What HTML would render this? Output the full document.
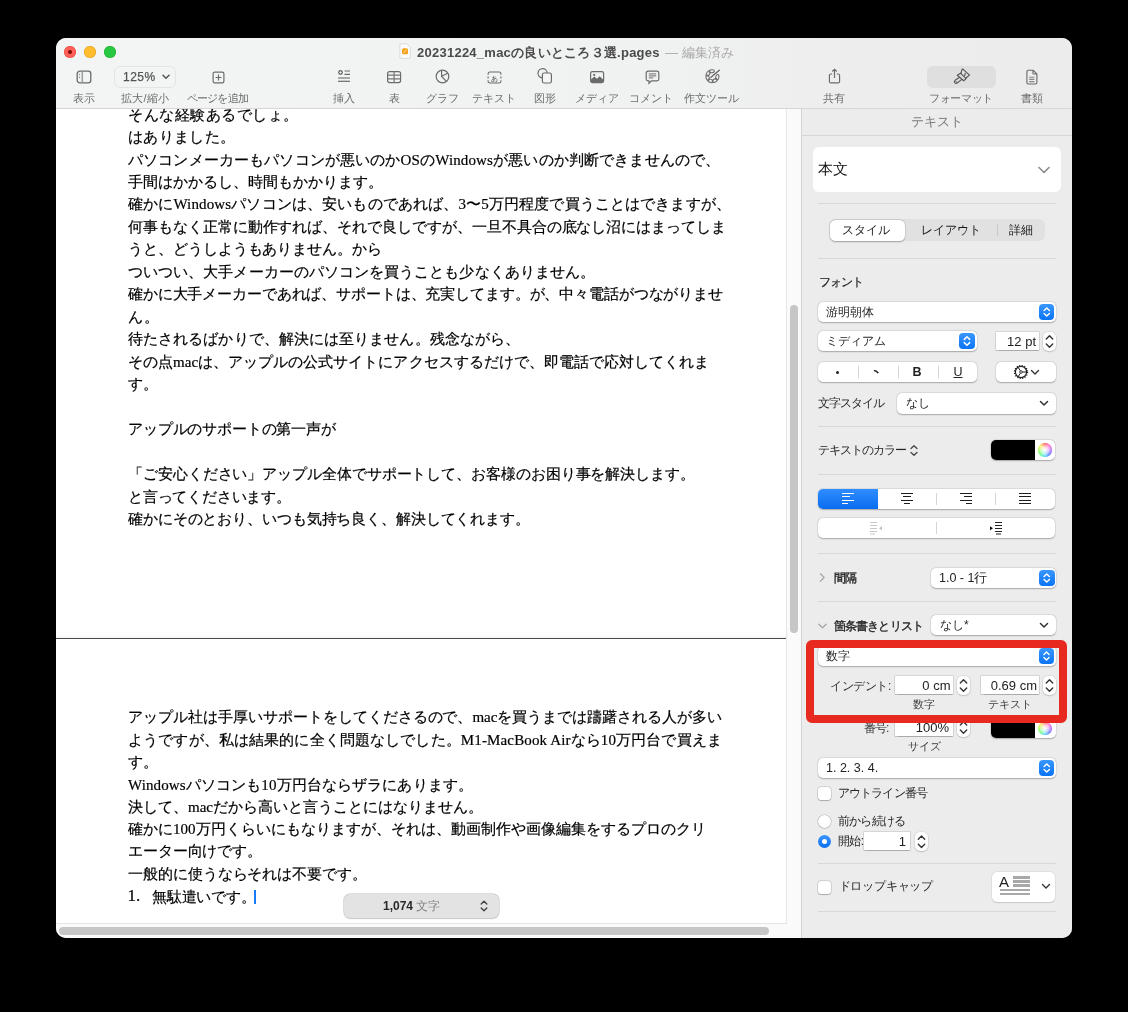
<!DOCTYPE html>
<html><head><meta charset="utf-8">
<style>
*{box-sizing:border-box;margin:0;padding:0}
html,body{width:1128px;height:1012px;overflow:hidden;background:#000}
body{font-family:"Liberation Sans",sans-serif;position:relative}
.a{position:absolute}
.win{position:absolute;left:56px;top:38px;width:1016px;height:900px;border-radius:10px;overflow:hidden;background:#ececec;will-change:transform}
.g{position:absolute;left:-56px;top:-38px;width:1128px;height:1012px}
.tb{position:absolute;left:56px;top:38px;width:1016px;height:70px;background:linear-gradient(90deg,#f3f4f4 0%,#f0f1f1 60%,#ededed 80%,#ececec 100%)}
.tbl{position:absolute;top:91px;height:14px;font-size:11px;line-height:14px;color:#6c6c6c;white-space:nowrap;text-align:center}
.doc{position:absolute;left:56px;top:109px;width:730px;height:814px;background:#fff;overflow:hidden}
.L{position:absolute;left:128px;height:20px;line-height:20px;font-family:"Liberation Serif",serif;font-size:15px;color:#000;white-space:nowrap;-webkit-text-stroke:.2px #000}
.side{position:absolute;left:801px;top:108px;width:271px;height:830px;background:#ececec;border-left:1px solid #d3d3d3}
.sep{position:absolute;left:818px;width:238px;height:1px;background:#d8d8d8}
.pop{position:absolute;background:#fff;border-radius:5px;box-shadow:0 0.5px 1.5px rgba(0,0,0,.28),0 0 0 .5px rgba(0,0,0,.06)}
.lab{position:absolute;font-size:12px;line-height:14px;color:#262626;white-space:nowrap}
.blue{position:absolute;border-radius:4px;background:linear-gradient(#3b97ff,#0a74f5)}
.fld{position:absolute;background:#fff;box-shadow:0 0 0 .5px rgba(0,0,0,.18),0 .5px 1px rgba(0,0,0,.2)}
.stp{position:absolute;background:#fff;border-radius:5px;box-shadow:0 .5px 1.5px rgba(0,0,0,.28),0 0 0 .5px rgba(0,0,0,.06)}
</style></head><body>
<div class="win"><div class="g">
  <!-- toolbar -->
  <!-- document -->
  <div class="doc"></div>
<div class="L" style="top:105.0px;letter-spacing:0.500px">そんな経験あるでしょ。</div>
<div class="L" style="top:127.2px;letter-spacing:0.333px">はありました。</div>
<div class="L" style="top:149.5px;letter-spacing:0.143px">パソコンメーカーもパソコンが悪いのかOSのWindowsが悪いのか判断できませんので、</div>
<div class="L" style="top:172.1px;letter-spacing:0.000px">手間はかかるし、時間もかかります。</div>
<div class="L" style="top:194.0px;letter-spacing:0.140px">確かにWindowsパソコンは、安いものであれば、3〜5万円程度で買うことはできますが、</div>
<div class="L" style="top:216.5px;letter-spacing:-0.051px">何事もなく正常に動作すれば、それで良しですが、一旦不具合の底なし沼にはまってしま</div>
<div class="L" style="top:239.0px;letter-spacing:-0.062px">うと、どうしようもありません。から</div>
<div class="L" style="top:261.5px;letter-spacing:0.067px">ついつい、大手メーカーのパソコンを買うことも少なくありません。</div>
<div class="L" style="top:284.0px;letter-spacing:-0.128px">確かに大手メーカーであれば、サポートは、充実してます。が、中々電話がつながりませ</div>
<div class="L" style="top:306.5px;letter-spacing:1.000px">ん。</div>
<div class="L" style="top:329.0px;letter-spacing:0.080px">待たされるばかりで、解決には至りません。残念ながら、</div>
<div class="L" style="top:351.5px;letter-spacing:0.026px">その点macは、アップルの公式サイトにアクセスするだけで、即電話で応対してくれま</div>
<div class="L" style="top:374.0px;letter-spacing:0.000px">す。</div>
<div class="L" style="top:419.0px;letter-spacing:-0.154px">アップルのサポートの第一声が</div>
<div class="L" style="top:464.0px;letter-spacing:-0.081px">「ご安心ください」アップル全体でサポートして、お客様のお困り事を解決します。</div>
<div class="L" style="top:486.5px;letter-spacing:-0.200px">と言ってくださいます。</div>
<div class="L" style="top:509.0px;letter-spacing:-0.115px">確かにそのとおり、いつも気持ち良く、解決してくれます。</div>
<div class="L" style="top:707.1px;letter-spacing:-0.025px">アップル社は手厚いサポートをしてくださるので、macを買うまでは躊躇される人が多い</div>
<div class="L" style="top:729.7px;letter-spacing:0.130px">ようですが、私は結果的に全く問題なしでした。M1-MacBook Airなら10万円台で買えま</div>
<div class="L" style="top:752.3px;letter-spacing:0.000px">す。</div>
<div class="L" style="top:774.9px;letter-spacing:0.115px">Windowsパソコンも10万円台ならザラにあります。</div>
<div class="L" style="top:796.5px;letter-spacing:0.000px">決して、macだから高いと言うことにはなりません。</div>
<div class="L" style="top:819.0px;letter-spacing:0.000px">確かに100万円くらいにもなりますが、それは、動画制作や画像編集をするプロのクリ</div>
<div class="L" style="top:841.2px;letter-spacing:-0.125px">エーター向けです。</div>
<div class="L" style="top:863.8px;letter-spacing:-0.067px">一般的に使うならそれは不要です。</div>

<div class="a" style="left:56px;top:634px;width:730px;height:4px;background:linear-gradient(#fff,#f6f6f6)"></div>
<div class="a" style="left:56px;top:638px;width:730px;height:1px;background:#4a4a4a"></div>
<div class="L" style="top:885.8px;font-size:17px;left:127.5px">1.</div>
<div class="L" style="left:152px;top:886.5px;letter-spacing:-0.25px">無駄遣いです。</div>
<div class="a" style="left:253.5px;top:889.5px;width:2.4px;height:14.5px;background:#1a7af5"></div>
  <div class="a" style="left:343.5px;top:893.5px;width:155px;height:24px;border-radius:6px;background:#e3e3e3;box-shadow:0 0 0 .5px rgba(0,0,0,.22),0 .5px 1.5px rgba(0,0,0,.12)"></div>
  <div class="a" style="left:383px;top:899px;height:14px;line-height:14px;font-size:12px;font-weight:bold;color:#2a2a2a;white-space:nowrap">1,074 <span style="font-weight:normal;color:#808080">文字</span></div>
  <svg class="a" style="left:478.5px;top:898px" width="10" height="16" viewBox="0 0 10 16"><path d="M2.2 6L5 3.2 7.8 6M2.2 10L5 12.8 7.8 10" fill="none" stroke="#444" stroke-width="1.4" stroke-linecap="round" stroke-linejoin="round"/></svg>


  <div class="a" style="left:56px;top:923px;width:745px;height:15px;background:#fafafa"></div><div class="a" style="left:56px;top:923px;width:731px;height:1px;background:#e6e6e6"></div>
  <div class="a" style="left:59px;top:927px;width:710px;height:8px;border-radius:4px;background:#c6c6c6"></div>
  <div class="a" style="left:786px;top:109px;width:15px;height:814px;background:#fafafa;border-left:1px solid #e6e6e6"></div>
  <div class="a" style="left:790px;top:305px;width:8px;height:328px;border-radius:4px;background:#c6c6c6"></div>
  <!-- sidebar -->
  <div class="side"></div>
<div class="a" style="left:802px;top:135px;width:270px;height:1px;background:#d6d6d6"></div>
<div class="lab" style="left:886.5px;width:100px;text-align:center;top:115px;font-size:12.5px;color:#7d7d7d">テキスト</div>
<div class="a" style="left:813px;top:147px;width:248px;height:45px;border-radius:6px;background:#fff"></div>
<div class="a" style="left:818px;top:159px;height:20px;line-height:20px;font-family:'Liberation Serif',serif;font-size:15px;color:#111">本文</div>
<svg class="a" style="left:1036.5px;top:164.5px" width="14" height="10" viewBox="0 0 14 10"><path d="M2 2.5l5 5 5-5" fill="none" stroke="#8a8a8a" stroke-width="1.6" stroke-linecap="round" stroke-linejoin="round"/></svg>
<div class="sep" style="top:203px"></div>
<div class="a" style="left:829px;top:219px;width:216px;height:22px;border-radius:6px;background:#e1e1e1"></div>
<div class="a" style="left:829.5px;top:219.5px;width:75.5px;height:21px;border-radius:5.5px;background:#fff;box-shadow:0 .5px 1.5px rgba(0,0,0,.3),0 0 0 .5px rgba(0,0,0,.08)"></div>
<div class="a" style="left:997px;top:224px;width:1px;height:12px;background:#c8c8c8"></div>
<div class="lab" style="left:816px;width:100px;text-align:center;top:223px;color:#1a1a1a">スタイル</div>
<div class="lab" style="left:901px;width:100px;text-align:center;top:223px;color:#1a1a1a">レイアウト</div>
<div class="lab" style="left:971px;width:100px;text-align:center;top:223px;color:#1a1a1a">詳細</div>
<div class="sep" style="top:258px"></div>
<div class="lab" style="left:819px;top:275px;font-size:11.5px;letter-spacing:-1px;-webkit-text-stroke:.2px #262626">フォント</div>
<div class="pop" style="left:818px;top:302px;width:238px;height:19.5px"></div>
<div class="lab" style="left:826px;top:304.5px;">游明朝体</div>
<div class="blue" style="left:1038.5px;top:303.5px;width:15.5px;height:16px"></div><svg class="a" style="left:1038.5px;top:303.5px" width="15.5" height="16" viewBox="0 0 16 16"><path d="M5.3 6.4L8 3.8l2.7 2.6M5.3 9.6L8 12.2l2.7-2.6" fill="none" stroke="#fff" stroke-width="1.5" stroke-linecap="round" stroke-linejoin="round"/></svg>
<div class="pop" style="left:818px;top:331px;width:159px;height:20px"></div>
<div class="lab" style="left:826px;top:334px;">ミディアム</div>
<div class="blue" style="left:959px;top:333px;width:16px;height:16px"></div><svg class="a" style="left:959px;top:333px" width="16" height="16" viewBox="0 0 16 16"><path d="M5.3 6.4L8 3.8l2.7 2.6M5.3 9.6L8 12.2l2.7-2.6" fill="none" stroke="#fff" stroke-width="1.5" stroke-linecap="round" stroke-linejoin="round"/></svg>
<div class="fld" style="left:996px;top:332px;width:43px;height:18px"></div>
<div class="lab" style="left:991px;width:45px;text-align:right;top:334.8px;font-size:13px;color:#222">12 pt</div>
<div class="stp" style="left:1043px;top:332px;width:13px;height:19px"></div><svg class="a" style="left:1043px;top:332px" width="13" height="19" viewBox="0 0 13 19"><path d="M3.3 7L6.5 3.8 9.7 7M3.3 12L6.5 15.2 9.7 12" fill="none" stroke="#333" stroke-width="1.4" stroke-linecap="round" stroke-linejoin="round"/></svg>
<div class="pop" style="left:818px;top:362px;width:159px;height:20px"></div>
<div class="a" style="left:857.5px;top:366px;width:1px;height:12px;background:#d5d5d5"></div>
<div class="a" style="left:897.5px;top:366px;width:1px;height:12px;background:#d5d5d5"></div>
<div class="a" style="left:937.5px;top:366px;width:1px;height:12px;background:#d5d5d5"></div>
<div class="a" style="left:836px;top:370.5px;width:3px;height:3px;border-radius:50%;background:#222"></div>
<svg class="a" style="left:871px;top:367px" width="12" height="10" viewBox="0 0 12 10"><path d="M3 3.5c2 .2 3.3 1 4.2 2.7" fill="none" stroke="#222" stroke-width="1.6"/></svg>
<div class="a" style="left:912.5px;top:365px;height:14px;line-height:14px;font-size:12.5px;font-weight:bold;color:#222">B</div>
<div class="a" style="left:953.5px;top:365px;height:14px;line-height:14px;font-size:12.5px;color:#222;text-decoration:underline">U</div>
<div class="pop" style="left:996px;top:362px;width:60px;height:20px"></div>
<svg class="a" style="left:1013.2px;top:363.8px" width="16" height="16" viewBox="0 0 16 16" fill="none" stroke="#222">
    <circle cx="8" cy="8" r="5.6" stroke-width="1.2"/>
    <circle cx="8" cy="8" r="6.5" stroke-width="1.3" stroke-dasharray="1.1 1.45"/>
    <path d="M7.2 6.6L5.2 3.4M7.2 9.4L5.2 12.6M9.3 8h4.2" stroke-width="1"/>
    <circle cx="8" cy="8" r="1.3" stroke-width=".9"/>
  </svg>
<svg class="a" style="left:1030px;top:369px" width="10" height="7" viewBox="0 0 10 7"><path d="M1.5 1.5L5 5l3.5-3.5" fill="none" stroke="#333" stroke-width="1.4" stroke-linecap="round" stroke-linejoin="round"/></svg>
<div class="lab" style="left:818px;top:396px;letter-spacing:-1px">文字スタイル</div>
<div class="pop" style="left:897px;top:393px;width:159px;height:20.5px"></div>
<div class="lab" style="left:906px;top:396px;">なし</div>
<svg class="a" style="left:1039px;top:400px" width="10" height="7" viewBox="0 0 10 7"><path d="M1.5 1.5L5 5l3.5-3.5" fill="none" stroke="#333" stroke-width="1.5" stroke-linecap="round" stroke-linejoin="round"/></svg>
<div class="sep" style="top:426px"></div>
<div class="lab" style="left:818px;top:443px;letter-spacing:-1px">テキストのカラー</div>
<svg class="a" style="left:909px;top:444px" width="10" height="13" viewBox="0 0 10 13"><path d="M2 4.5L5 1.7 8 4.5M2 8.5L5 11.3 8 8.5" fill="none" stroke="#444" stroke-width="1.3" stroke-linecap="round" stroke-linejoin="round"/></svg>
<div class="pop" style="left:991px;top:440px;width:64px;height:20px;overflow:hidden"><div class="a" style="left:0;top:0;width:44px;height:20px;background:#000"></div></div>
<div class="a" style="left:1038px;top:443px;width:13.5px;height:13.5px;border-radius:50%;background:conic-gradient(from 0deg,#ff3030,#ff40c0,#a040ff,#3050ff,#20c8ff,#30ff60,#90ff30,#ffe030,#ff3030)"></div>
<div class="a" style="left:1038px;top:443px;width:13.5px;height:13.5px;border-radius:50%;background:radial-gradient(circle,#fff 0%,rgba(255,255,255,.75) 35%,rgba(255,255,255,.15) 75%,rgba(255,255,255,.1) 100%)"></div>
<div class="sep" style="top:474px"></div>
<div class="pop" style="left:818px;top:489px;width:236.5px;height:20px;overflow:hidden"><div class="a" style="left:0;top:0;width:60px;height:20px;background:linear-gradient(#2f8dff,#0a6df0)"></div></div>
<div class="a" style="left:936px;top:493px;width:1px;height:12px;background:#d5d5d5"></div>
<div class="a" style="left:995px;top:493px;width:1px;height:12px;background:#d5d5d5"></div>
<div class="a" style="left:842px;top:493px;width:12px;height:1.1px;background:#fff"></div><div class="a" style="left:842px;top:496.2px;width:8px;height:1.1px;background:#fff"></div><div class="a" style="left:842px;top:499.8px;width:12px;height:1.1px;background:#fff"></div><div class="a" style="left:842px;top:503.2px;width:6px;height:1.1px;background:#fff"></div>
<div class="a" style="left:901.0px;top:493px;width:12px;height:1.1px;background:#1e1e1e"></div><div class="a" style="left:903.0px;top:496.2px;width:8px;height:1.1px;background:#1e1e1e"></div><div class="a" style="left:901.0px;top:499.8px;width:12px;height:1.1px;background:#1e1e1e"></div><div class="a" style="left:904.0px;top:503.2px;width:6px;height:1.1px;background:#1e1e1e"></div>
<div class="a" style="left:960px;top:493px;width:12px;height:1.1px;background:#1e1e1e"></div><div class="a" style="left:964px;top:496.2px;width:8px;height:1.1px;background:#1e1e1e"></div><div class="a" style="left:960px;top:499.8px;width:12px;height:1.1px;background:#1e1e1e"></div><div class="a" style="left:966px;top:503.2px;width:6px;height:1.1px;background:#1e1e1e"></div>
<div class="a" style="left:1019px;top:493px;width:12px;height:1.1px;background:#1e1e1e"></div><div class="a" style="left:1019px;top:496.2px;width:12px;height:1.1px;background:#1e1e1e"></div><div class="a" style="left:1019px;top:499.8px;width:12px;height:1.1px;background:#1e1e1e"></div><div class="a" style="left:1019px;top:503.2px;width:12px;height:1.1px;background:#1e1e1e"></div>
<div class="pop" style="left:818px;top:518px;width:236.5px;height:20px"></div>
<div class="a" style="left:936px;top:522px;width:1px;height:12px;background:#d5d5d5"></div>
<svg class="a" style="left:869px;top:521px" width="16" height="14" viewBox="0 0 16 14"><path d="M1 1.5h7M1 4.5h7M1 7.5h7M1 10.5h7M1 13h5" stroke="#c8c8c8" stroke-width="1.1"/><path d="M13 5.2v4l-3-2z" fill="#bdbdbd"/></svg>
<svg class="a" style="left:988px;top:521px" width="16" height="14" viewBox="0 0 16 14"><path d="M7 1.5h7M7 4.5h7M7 7.5h7M7 10.5h7M8 13h5" stroke="#222" stroke-width="1.2"/><path d="M2 5.2v4l3-2z" fill="#111"/></svg>
<div class="sep" style="top:553px"></div>
<svg class="a" style="left:818px;top:572px" width="8" height="11" viewBox="0 0 8 11"><path d="M2.5 1.8l3.6 3.7-3.6 3.7" fill="none" stroke="#a8a8a8" stroke-width="1.3" stroke-linecap="round" stroke-linejoin="round"/></svg>
<div class="lab" style="left:833.5px;top:570.5px;font-size:11.5px;letter-spacing:-1px;-webkit-text-stroke:.35px #262626">間隔</div>
<div class="pop" style="left:931px;top:568px;width:125px;height:20px"></div>
<div class="lab" style="left:939px;top:571px;font-size:12.5px;color:#222">1.0 - 1行</div>
<div class="blue" style="left:1039px;top:570px;width:15.5px;height:16px"></div><svg class="a" style="left:1039px;top:570px" width="15.5" height="16" viewBox="0 0 16 16"><path d="M5.3 6.4L8 3.8l2.7 2.6M5.3 9.6L8 12.2l2.7-2.6" fill="none" stroke="#fff" stroke-width="1.5" stroke-linecap="round" stroke-linejoin="round"/></svg>
<div class="sep" style="top:601px"></div>
<svg class="a" style="left:817px;top:622px" width="11" height="8" viewBox="0 0 11 8"><path d="M1.8 2.2l3.7 3.6 3.7-3.6" fill="none" stroke="#a8a8a8" stroke-width="1.3" stroke-linecap="round" stroke-linejoin="round"/></svg>
<div class="lab" style="left:833.5px;top:619px;font-size:11.5px;letter-spacing:-.8px;-webkit-text-stroke:.35px #262626">箇条書きとリスト</div>
<div class="pop" style="left:931px;top:615px;width:125px;height:20px"></div>
<div class="lab" style="left:940px;top:618px;">なし*</div>
<svg class="a" style="left:1039px;top:622px" width="10" height="7" viewBox="0 0 10 7"><path d="M1.5 1.5L5 5l3.5-3.5" fill="none" stroke="#333" stroke-width="1.5" stroke-linecap="round" stroke-linejoin="round"/></svg>
<div class="pop" style="left:818px;top:646px;width:238px;height:20px"></div>
<div class="lab" style="left:826px;top:648.5px;">数字</div>
<div class="blue" style="left:1039px;top:647.5px;width:15px;height:16px"></div><svg class="a" style="left:1039px;top:647.5px" width="15" height="16" viewBox="0 0 16 16"><path d="M5.3 6.4L8 3.8l2.7 2.6M5.3 9.6L8 12.2l2.7-2.6" fill="none" stroke="#fff" stroke-width="1.5" stroke-linecap="round" stroke-linejoin="round"/></svg>
<div class="lab" style="left:830px;top:678.5px;color:#333;letter-spacing:-.4px">インデント:</div>
<div class="fld" style="left:894.5px;top:676px;width:58.5px;height:18px"></div>
<div class="lab" style="left:881.5px;width:69px;text-align:right;top:678.8px;font-size:13px;color:#222">0 cm</div>
<div class="stp" style="left:957px;top:676px;width:13px;height:19px"></div><svg class="a" style="left:957px;top:676px" width="13" height="19" viewBox="0 0 13 19"><path d="M3.3 7L6.5 3.8 9.7 7M3.3 12L6.5 15.2 9.7 12" fill="none" stroke="#333" stroke-width="1.4" stroke-linecap="round" stroke-linejoin="round"/></svg>
<div class="fld" style="left:981px;top:676px;width:58px;height:18px"></div>
<div class="lab" style="left:962px;width:75px;text-align:right;top:678.8px;font-size:13px;color:#222">0.69 cm</div>
<div class="stp" style="left:1043px;top:676px;width:13px;height:19px"></div><svg class="a" style="left:1043px;top:676px" width="13" height="19" viewBox="0 0 13 19"><path d="M3.3 7L6.5 3.8 9.7 7M3.3 12L6.5 15.2 9.7 12" fill="none" stroke="#333" stroke-width="1.4" stroke-linecap="round" stroke-linejoin="round"/></svg>
<div class="lab" style="left:874px;width:100px;text-align:center;top:697px;font-size:11px;color:#3d3d3d">数字</div>
<div class="lab" style="left:960px;width:100px;text-align:center;top:697px;font-size:11px;color:#3d3d3d">テキスト</div>
<div class="lab" style="left:864px;top:721px;color:#333;letter-spacing:-1px">番号:</div>
<div class="fld" style="left:894.5px;top:718px;width:58.5px;height:18px"></div>
<div class="lab" style="left:880px;width:69px;text-align:right;top:720.8px;font-size:13px;color:#222">100%</div>
<div class="stp" style="left:957px;top:718px;width:13px;height:19px"></div><svg class="a" style="left:957px;top:718px" width="13" height="19" viewBox="0 0 13 19"><path d="M3.3 7L6.5 3.8 9.7 7M3.3 12L6.5 15.2 9.7 12" fill="none" stroke="#333" stroke-width="1.4" stroke-linecap="round" stroke-linejoin="round"/></svg>
<div class="pop" style="left:990.5px;top:718px;width:65.5px;height:20px;overflow:hidden"><div class="a" style="left:0;top:0;width:44.5px;height:20px;background:#000"></div></div>
<div class="a" style="left:1038px;top:721.5px;width:13.5px;height:13.5px;border-radius:50%;background:conic-gradient(from 0deg,#ff3030,#ff40c0,#a040ff,#3050ff,#20c8ff,#30ff60,#90ff30,#ffe030,#ff3030)"></div>
<div class="a" style="left:1038px;top:721.5px;width:13.5px;height:13.5px;border-radius:50%;background:radial-gradient(circle,#fff 0%,rgba(255,255,255,.75) 35%,rgba(255,255,255,.15) 75%,rgba(255,255,255,.1) 100%)"></div>
<div class="lab" style="left:874px;width:100px;text-align:center;top:739px;font-size:11px;color:#3d3d3d">サイズ</div>
<div class="pop" style="left:818px;top:758px;width:238px;height:20px"></div>
<div class="lab" style="left:826px;top:761px;font-size:12.5px;color:#222">1. 2. 3. 4.</div>
<div class="blue" style="left:1038.5px;top:760px;width:15.5px;height:16px"></div><svg class="a" style="left:1038.5px;top:760px" width="15.5" height="16" viewBox="0 0 16 16"><path d="M5.3 6.4L8 3.8l2.7 2.6M5.3 9.6L8 12.2l2.7-2.6" fill="none" stroke="#fff" stroke-width="1.5" stroke-linecap="round" stroke-linejoin="round"/></svg>
<div class="a" style="left:818px;top:787px;width:13px;height:13px;border-radius:3px;background:#fff;box-shadow:0 0 0 .5px rgba(0,0,0,.2),0 .5px 1px rgba(0,0,0,.2)"></div>
<div class="lab" style="left:838px;top:786px;letter-spacing:-.9px">アウトライン番号</div>
<div class="a" style="left:818px;top:814.5px;width:13px;height:13px;border-radius:50%;background:#fff;box-shadow:0 0 0 .5px rgba(0,0,0,.2),0 .5px 1px rgba(0,0,0,.2)"></div>
<div class="lab" style="left:838px;top:814px;letter-spacing:-.8px">前から続ける</div>
<div class="a" style="left:818px;top:834.5px;width:13px;height:13px;border-radius:50%;background:linear-gradient(#3a95ff,#0a6ff0)"></div>
<div class="a" style="left:822px;top:838.5px;width:5px;height:5px;border-radius:50%;background:#fff"></div>
<div class="lab" style="left:838px;top:834px;letter-spacing:-.6px">開始:</div>
<div class="fld" style="left:864px;top:832px;width:46px;height:18px"></div>
<div class="lab" style="left:860px;width:46px;text-align:right;top:834.8px;font-size:13px;color:#222">1</div>
<div class="stp" style="left:914.5px;top:831.5px;width:13px;height:19.5px"></div><svg class="a" style="left:914.5px;top:831.5px" width="13" height="19.5" viewBox="0 0 13 19"><path d="M3.3 7L6.5 3.8 9.7 7M3.3 12L6.5 15.2 9.7 12" fill="none" stroke="#333" stroke-width="1.4" stroke-linecap="round" stroke-linejoin="round"/></svg>
<div class="sep" style="top:862.5px"></div>
<div class="a" style="left:818px;top:881px;width:13px;height:13px;border-radius:3px;background:#fff;box-shadow:0 0 0 .5px rgba(0,0,0,.2),0 .5px 1px rgba(0,0,0,.2)"></div>
<div class="lab" style="left:838.5px;top:879px;letter-spacing:-.2px">ドロップキャップ</div>
<div class="a" style="left:992px;top:872px;width:63px;height:29.5px;border-radius:5px;background:#fff;box-shadow:0 0 0 .5px rgba(0,0,0,.08),0 .5px 1px rgba(0,0,0,.12)"></div>
<div class="a" style="left:999px;top:873.5px;height:16px;line-height:16px;font-size:15px;color:#222">A</div>
<div class="a" style="left:1013px;top:876px;width:17px;height:2.6px;background:#a8a8a8"></div>
<div class="a" style="left:1013px;top:880px;width:17px;height:2.6px;background:#a8a8a8"></div>
<div class="a" style="left:1013px;top:884px;width:17px;height:2.6px;background:#a8a8a8"></div>
<div class="a" style="left:1000px;top:888.5px;width:30px;height:2.6px;background:#a8a8a8"></div>
<div class="a" style="left:1000px;top:892.5px;width:30px;height:2.6px;background:#a8a8a8"></div>
<svg class="a" style="left:1041px;top:883px" width="10" height="7" viewBox="0 0 10 7"><path d="M1.5 1.5L5 5l3.5-3.5" fill="none" stroke="#333" stroke-width="1.4" stroke-linecap="round" stroke-linejoin="round"/></svg>
<div class="sep" style="top:911px"></div>
<div class="a" style="left:806px;top:640px;width:261px;height:82.5px;border:8px solid #e8291f;border-radius:6px"></div>

  <!-- TOOLBAR -->
  <div class="tb"></div>
  <div class="a" style="left:56px;top:108px;width:1016px;height:1px;background:#d6d6d6"></div>
  <!-- traffic lights -->
  <div class="a" style="left:64px;top:46px;width:12px;height:12px;border-radius:50%;background:#ff5f57;box-shadow:inset 0 0 0 .5px #e2463f"></div>
  <div class="a" style="left:68px;top:50px;width:4px;height:4px;border-radius:50%;background:#7e0a03"></div>
  <div class="a" style="left:84px;top:46px;width:12px;height:12px;border-radius:50%;background:#febc2e;box-shadow:inset 0 0 0 .5px #df9f1f"></div>
  <div class="a" style="left:104px;top:46px;width:12px;height:12px;border-radius:50%;background:#28c840;box-shadow:inset 0 0 0 .5px #1dac2c"></div>
  <!-- title -->
  <svg class="a" style="left:399px;top:43px" width="12" height="16" viewBox="0 0 12 16">
    <path d="M1.5 .8h6.2l3.5 3.5v10.4a.6.6 0 0 1-.6.6H1.5a.6.6 0 0 1-.6-.6V1.4a.6.6 0 0 1 .6-.6z" fill="#fbfbfb" stroke="#d4d4d4" stroke-width=".8"/>
    <rect x="3" y="5.2" width="6" height="6" rx="1.5" fill="#f6a21e"/>
    <path d="M4.5 9.8l3-3.2" stroke="#fff3c0" stroke-width=".8"/>
  </svg>
  <div class="a" id="ttl" style="left:417px;top:44.5px;letter-spacing:.25px;height:16px;line-height:16px;font-size:13px;font-weight:bold;color:#4b4b4b;white-space:nowrap">20231224_macの良いところ３選.pages</div>
  <div class="a" id="ttl2" style="left:665px;top:44.5px;height:16px;line-height:16px;font-size:13px;color:#a9a9a9;white-space:nowrap">— 編集済み</div>
  <!-- icons -->
  <svg class="a" style="left:76px;top:70px" width="16" height="14" viewBox="0 0 16 14" fill="none" stroke="#6b6b6b" stroke-width="1.3">
    <rect x="1.2" y="1.2" width="13.6" height="11.6" rx="2.6"/>
    <path d="M6.3 1.4v11.2" stroke="#a0a0a0" stroke-width="1.6"/>
    <circle cx="3.6" cy="4.3" r=".6" fill="#6b6b6b" stroke="none"/><circle cx="3.6" cy="7.2" r=".6" fill="#6b6b6b" stroke="none"/>
  </svg>
  <div class="a" style="left:114px;top:66px;width:62px;height:22px;border-radius:6px;border:1px solid #e3e4e4"></div>
  <div class="a" id="zoomt" style="left:123px;top:70px;height:14px;line-height:14px;font-size:12px;letter-spacing:.5px;-webkit-text-stroke:.25px #555;color:#555;white-space:nowrap">125%</div>
  <svg class="a" style="left:162px;top:74px" width="8" height="6" viewBox="0 0 8 6"><path d="M1 1.2l3 3 3-3" fill="none" stroke="#555" stroke-width="1.5" stroke-linecap="round" stroke-linejoin="round"/></svg>
  <svg class="a" style="left:212px;top:71px" width="13" height="13" viewBox="0 0 13 13" fill="none" stroke="#6b6b6b" stroke-width="1.2">
    <rect x="1.1" y="1.1" width="10.8" height="10.8" rx="1.6"/><path d="M6.5 3.6v5.8M3.6 6.5h5.8"/>
  </svg>
  <svg class="a" style="left:337px;top:69px" width="14" height="14" viewBox="0 0 14 14" fill="none" stroke="#6b6b6b" stroke-width="1.2">
    <circle cx="3.5" cy="3.5" r="2.4" fill="#6b6b6b" stroke="none"/><path d="M2.2 3.5h2.6M3.5 2.2v2.6" stroke="#f0f0f0" stroke-width=".8"/>
    <path d="M7.5 2h5.5M7.5 5.3h5.5" /><path d="M1 9h12" stroke="#888" stroke-width="1.4"/><path d="M1 12.3h12"/>
  </svg>
  <svg class="a" style="left:386px;top:70px" width="16" height="14" viewBox="0 0 16 14" fill="none" stroke="#6b6b6b" stroke-width="1.2">
    <rect x="1.6" y="1.6" width="13" height="11" rx="2"/><path d="M1.7 5.2h12.8M1.7 8.8h12.8M8.1 1.7v10.8" stroke="#777"/>
  </svg>
  <svg class="a" style="left:435px;top:69px" width="15" height="15" viewBox="0 0 15 15" fill="none" stroke="#6b6b6b" stroke-width="1.2">
    <circle cx="7.5" cy="7.5" r="6.3"/><path d="M6.6 1.3v6.2l4.6 4.6M6.8 7.2l5.8-3"/>
  </svg>
  <svg class="a" style="left:486.5px;top:70.5px" width="15" height="13" viewBox="0 0 16 14" fill="none" stroke="#6b6b6b" stroke-width="1.2">
    <path d="M1.1 4V3a1.9 1.9 0 0 1 1.9-1.9h10a1.9 1.9 0 0 1 1.9 1.9v1M1.1 6v2M14.9 6v2M1.1 10v1a1.9 1.9 0 0 0 1.9 1.9h10a1.9 1.9 0 0 0 1.9-1.9v-1"/>
    <text x="8" y="10.3" font-size="8" text-anchor="middle" fill="#555" stroke="none" font-family="Liberation Sans">あ</text>
  </svg>
  <svg class="a" style="left:537px;top:68px" width="16" height="16" viewBox="0 0 16 16" fill="none" stroke="#6b6b6b" stroke-width="1.2">
    <path d="M5.2 9.8A4.6 4.6 0 1 1 10.2 4.9"/><rect x="5.4" y="5" width="9" height="10" rx="1.8" fill="#f6f6f6"/>
  </svg>
  <svg class="a" style="left:589px;top:70px" width="16" height="14" viewBox="0 0 16 14">
    <rect x="1.6" y="1.6" width="13" height="11" rx="1.8" fill="none" stroke="#6b6b6b" stroke-width="1.2"/>
    <path d="M2 12.2v-2.8l3.3-3 2.7 2.3 2.6-2.4 3.8 3.4v2.5z" fill="#6b6b6b"/><circle cx="5.2" cy="4.9" r="1.1" fill="#6b6b6b"/>
  </svg>
  <svg class="a" style="left:645px;top:70px" width="15" height="15" viewBox="0 0 15 15" fill="none" stroke="#6b6b6b" stroke-width="1.2">
    <path d="M3 1.2h9a1.8 1.8 0 0 1 1.8 1.8v6a1.8 1.8 0 0 1-1.8 1.8H6.5L4 13.3v-2.5H3A1.8 1.8 0 0 1 1.2 9V3A1.8 1.8 0 0 1 3 1.2z"/>
    <path d="M3.8 3.9h7.4M3.8 5.9h7.4M3.8 7.9h4.5" stroke="#888"/>
  </svg>
  <svg class="a" style="left:700px;top:64px" width="26" height="24" viewBox="0 0 26 24" fill="none" stroke="#6a6a6a" stroke-width="1.0">
    <ellipse cx="11.70" cy="7.25" rx="2.7" ry="1.55" transform="rotate(-8 11.70 7.25)"/><ellipse cx="8.16" cy="9.55" rx="2.7" ry="1.55" transform="rotate(-58 8.16 9.55)"/><ellipse cx="7.64" cy="13.75" rx="2.7" ry="1.55" transform="rotate(252 7.64 13.75)"/><ellipse cx="10.53" cy="16.84" rx="2.7" ry="1.55" transform="rotate(202 10.53 16.84)"/><ellipse cx="14.75" cy="16.61" rx="2.7" ry="1.55" transform="rotate(152 14.75 16.61)"/><ellipse cx="17.29" cy="13.24" rx="2.7" ry="1.55" transform="rotate(102 17.29 13.24)"/>
    <path d="M11 13.3L19.3 6.3" stroke-width="1.5" stroke-linecap="round"/>
  </svg>
  <svg class="a" style="left:828px;top:68px" width="13" height="16" viewBox="0 0 13 16" fill="none" stroke="#6b6b6b" stroke-width="1.15">
    <path d="M4.2 6H2.9a1.5 1.5 0 0 0-1.5 1.5v5.9a1.5 1.5 0 0 0 1.5 1.5h7.2a1.5 1.5 0 0 0 1.5-1.5V7.5A1.5 1.5 0 0 0 10.1 6H8.8M6.5 10V1.3M4.2 3.5l2.3-2.3 2.3 2.3"/>
  </svg>
  <div class="a" style="left:927px;top:66px;width:69px;height:22px;border-radius:6px;background:#dfdfdf"></div>
  <svg class="a" style="left:948px;top:64px" width="28" height="24" viewBox="0 0 28 24" fill="none" stroke="#555" stroke-width="1.15" stroke-linejoin="round" stroke-linecap="round">
    <path d="M9.3 11.3L12.4 9.2 18.1 14.6 15.7 16.7z"/>
    <path d="M12.9 9.6L14 5.6Q14.4 4.7 15.2 5.3L21.5 11.1 17.9 14"/>
    <path d="M17.3 9.4L16.6 11.5"/>
    <path d="M11.3 13.5L7.1 16.3Q5.8 17.5 6.9 18.8 8.1 19.9 9.4 18.8L13.6 15.6"/>
    <circle cx="8.1" cy="17.7" r=".6" fill="#555" stroke="none"/>
  </svg>
  <svg class="a" style="left:1026px;top:69px" width="12" height="16" viewBox="0 0 12 16" fill="none" stroke="#6b6b6b" stroke-width="1.15">
    <path d="M2.3 1.2h4.9l3.7 3.8v8.6a1.4 1.4 0 0 1-1.4 1.4H2.3A1.4 1.4 0 0 1 .9 13.6V2.6a1.4 1.4 0 0 1 1.4-1.4zM7 1.3v2.9a.8.8 0 0 0 .8.8h3"/>
    <path d="M3.2 8.2h5.2M3.2 10.4h5.2M3.2 12.6h5.2" stroke="#888"/>
  </svg>
  <!-- labels -->
  <div class="tbl" style="left:64px;width:40px">表示</div>
  <div class="tbl" style="left:115px;width:60px">拡大/縮小</div>
  <div class="tbl" style="left:182px;width:71px;letter-spacing:-.8px">ページを追加</div>
  <div class="tbl" style="left:324px;width:40px">挿入</div>
  <div class="tbl" style="left:374px;width:40px">表</div>
  <div class="tbl" style="left:417px;width:50px">グラフ</div>
  <div class="tbl" style="left:464px;width:60px">テキスト</div>
  <div class="tbl" style="left:525px;width:40px">図形</div>
  <div class="tbl" style="left:567px;width:60px">メディア</div>
  <div class="tbl" style="left:621px;width:60px">コメント</div>
  <div class="tbl" style="left:676px;width:70px">作文ツール</div>
  <div class="tbl" style="left:814px;width:40px">共有</div>
  <div class="tbl" style="left:926px;width:70px;letter-spacing:-.4px">フォーマット</div>
  <div class="tbl" style="left:1012px;width:40px">書類</div>
</div></div>
</body></html>
